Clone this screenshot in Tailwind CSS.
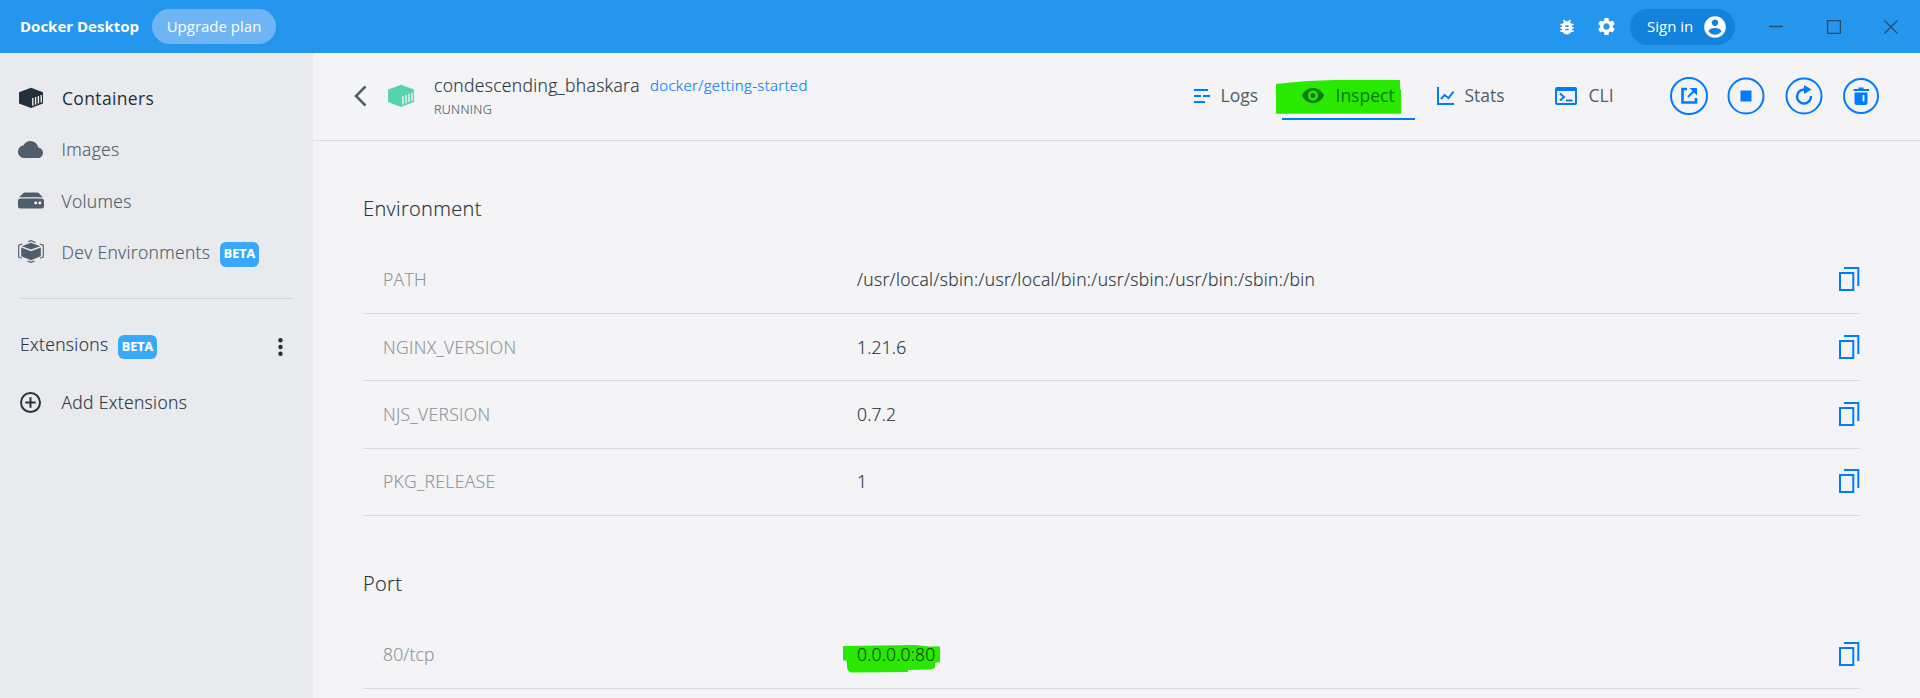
<!DOCTYPE html>
<html lang="en">
<head>
<meta charset="utf-8">
<title>Docker Desktop</title>
<script src="https://cdn.jsdelivr.net/npm/@tailwindcss/browser@4"></script>
</head>
<body class="h-[698px] w-[1920px] overflow-hidden bg-[#f4f4f6] font-['Open_Sans',sans-serif] text-[17.5px] leading-6 font-light tracking-[0.34px] text-[#27343f] [-webkit-text-stroke:0.2px]">
<svg class="hidden">
  <symbol id="container" viewBox="0 0 26 24" preserveAspectRatio="none">
    <path d="M13 .8 25 5.600v12.300L13 23 1 17.900V5.600z" fill="currentColor"/>
    <path d="M14.800 12v8.500M17.600 10.900v8.400M20.400 9.800v8.300M23.200 8.700v8.200" stroke="#ececef" stroke-width="1.4" fill="none"/>
  </symbol>
  <symbol id="copy" viewBox="0 0 21 24">
    <path d="M1 6h13.300v17H1zM5 1h14.300v18" fill="none" stroke="#007bff" stroke-width="2"/>
  </symbol>
</svg>

<header class="flex h-[53px] items-center bg-[#2496ed] pl-5 text-[15px] font-normal tracking-normal text-white [-webkit-text-stroke:0]">
  <div class="w-[132px] pb-px font-bold">Docker Desktop</div>
  <div class="flex h-[35px] w-[124px] items-center justify-center rounded-full bg-[#6fb5f6] pb-[2px]">Upgrade plan</div>
  <svg class="ml-auto size-[20px]" viewBox="0 0 24 24" fill="#fff"><path d="M20 8h-2.81a5.985 5.985 0 0 0-1.82-1.96L17 4.41 15.59 3l-2.17 2.17a6.002 6.002 0 0 0-2.83 0L8.41 3 7 4.41l1.62 1.63C7.88 6.55 7.26 7.22 6.81 8H4v2h2.09c-.05.33-.09.66-.09 1v1H4v2h2v1c0 .34.04.67.09 1H4v2h2.81c1.04 1.79 2.97 3 5.19 3s4.15-1.21 5.19-3H20v-2h-2.09c.05-.33.09-.66.09-1v-1h2v-2h-2v-1c0-.34-.04-.67-.09-1H20V8zm-6 8h-4v-2h4v2zm0-4h-4v-2h4v2z"/></svg>
  <svg class="ml-[19px] size-[21px]" viewBox="0 0 24 24" fill="#fff"><path d="M19.14 12.94c.04-.3.06-.61.06-.94 0-.32-.02-.64-.07-.94l2.03-1.58a.49.49 0 0 0 .12-.61l-1.92-3.32a.488.488 0 0 0-.59-.22l-2.39.96c-.5-.38-1.03-.7-1.62-.94l-.36-2.54a.484.484 0 0 0-.48-.41h-3.84c-.24 0-.43.17-.47.41l-.36 2.54c-.59.24-1.13.57-1.62.94l-2.39-.96c-.22-.08-.47 0-.59.22L2.74 8.87c-.12.21-.08.47.12.61l2.03 1.58c-.05.3-.09.63-.09.94s.02.64.07.94l-2.03 1.58a.49.49 0 0 0-.12.61l1.92 3.32c.12.22.37.29.59.22l2.39-.96c.5.38 1.03.7 1.62.94l.36 2.54c.05.24.24.41.48.41h3.84c.24 0 .44-.17.47-.41l.36-2.54c.59-.24 1.13-.56 1.62-.94l2.39.96c.22.08.47 0 .59-.22l1.92-3.32c.12-.22.07-.47-.12-.61l-2.01-1.58zM12 15.6A3.61 3.61 0 0 1 8.4 12c0-1.98 1.62-3.6 3.6-3.6s3.6 1.62 3.6 3.6-1.62 3.6-3.6 3.6z"/></svg>
  <div class="ml-[13px] flex h-9 w-[105px] items-center justify-between rounded-full bg-[#1282dc] pr-[7px] pl-[17px]">
    <span class="pb-[2px]">Sign in</span>
    <svg class="size-[26px]" viewBox="0 0 24 24" fill="#fff"><path d="M12 2C6.48 2 2 6.48 2 12s4.48 10 10 10 10-4.48 10-10S17.52 2 12 2zm0 3c1.66 0 3 1.34 3 3s-1.34 3-3 3-3-1.34-3-3 1.34-3 3-3zm0 14.2a7.2 7.2 0 0 1-6-3.22c.03-1.99 4-3.08 6-3.08 1.99 0 5.97 1.09 6 3.08a7.2 7.2 0 0 1-6 3.22z"/></svg>
  </div>
  <svg class="mr-[21px] ml-[34px] h-[14px] w-[130px]" viewBox="0 0 130 14" fill="none" stroke="#2d4a66" stroke-width="1.3"><path d="M0 6.5h14M58.6.6h12.8v12.8H58.6zM115.5.5l13 13M128.5.5l-13 13"/></svg>
</header>

<div class="flex h-[645px]">
  <aside class="w-[313px] shrink-0 bg-[#e9eaee] pt-[19px] text-[#505d6b]">
    <div class="flex h-[51.4px] items-center pl-[18px] font-normal text-[#22303a]">
      <svg class="h-[22px] w-[26px]"><use href="#container"/></svg>
      <span class="ml-[18px] font-medium tracking-[0.35px] [-webkit-text-stroke:0]">Containers</span>
    </div>
    <div class="flex h-[51.4px] items-center pl-[18px]">
      <svg class="h-[17px] w-[25px]" viewBox="0 4 24 16" preserveAspectRatio="none" fill="#505d6b"><path d="M19.35 10.04A7.49 7.49 0 0 0 12 4C9.11 4 6.6 5.64 5.35 8.04A5.994 5.994 0 0 0 0 14c0 3.31 2.69 6 6 6h13c2.76 0 5-2.24 5-5 0-2.64-2.05-4.78-4.65-4.96z"/></svg>
      <span class="ml-[18.5px]">Images</span>
    </div>
    <div class="flex h-[51.4px] items-center pl-[18px]">
      <svg class="h-[17px] w-[26px]" viewBox="0 0 26 17"><path d="M7 .5h12q1 0 1.6.6L25 5.3H1L5.4 1.1Q6 .5 7 .5zM2.500 6.500h21Q26 6.500 26 9v5q0 2.500-2.500 2.500h-21Q0 16.500 0 14V9q0-2.500 2.500-2.500z" fill="#505d6b"/><circle cx="17.7" cy="11" r="1.4" fill="#fff"/><circle cx="21.8" cy="11" r="1.4" fill="#fff"/></svg>
      <span class="mt-px ml-[17.5px]">Volumes</span>
    </div>
    <div class="flex h-[51.4px] items-center pl-[18px]">
      <svg class="h-[23px] w-[26px]" viewBox="0 0 26 23"><path d="M13 2.800 22.300 6.200 13 9.600 3.700 6.200zM3.200 7.600 13 11.300l9.800-3.700v8.600L13 20.300l-9.800-4.100z" fill="#505d6b"/><path d="M10 1.800 13 .7l4.500 1.700M4.200 3.900.7 5.200V17l3 1.300M21.800 3.900l3.500 1.300V17l-3 1.300M9.500 20.900l3.500 1.400 3.500-1.400" fill="none" stroke="#505d6b" stroke-width="1.1"/></svg>
      <span class="ml-[17.5px] w-[149px] whitespace-nowrap">Dev Environments</span>
      <span class="mt-[5px] ml-[9.5px] flex h-[25px] w-[39px] items-center justify-center rounded-md bg-[#39a8f8] text-[12.5px] font-bold tracking-normal text-white">BETA</span>
    </div>
    <div class="mx-5 mt-[20px] h-px bg-[#d0d3d8]"></div>
    <div class="mt-[20px] flex h-[51px] items-center pr-[30.5px] pl-5 text-[#27343f]">
      <span class="w-[88px] whitespace-nowrap">Extensions</span>
      <span class="mt-[6px] ml-[10px] flex h-6 w-[39px] items-center justify-center rounded-md bg-[#39a8f8] text-[12.5px] font-bold tracking-normal text-white">BETA</span>
      <svg class="mt-[5px] ml-auto h-[18px] w-[5px]" viewBox="0 0 5 18" fill="#22303a"><circle cx="2.5" cy="2.3" r="2.2"/><circle cx="2.5" cy="9" r="2.2"/><circle cx="2.5" cy="15.7" r="2.2"/></svg>
    </div>
    <div class="mt-[7px] flex h-[51px] items-center pl-[20px] text-[#27343f]">
      <svg class="size-[21px]" viewBox="0 0 21 21" fill="none" stroke="#27343f" stroke-width="2"><circle cx="10.5" cy="10.5" r="9.5"/><path d="M10.500 5.300v10.400M5.300 10.500h10.400"/></svg>
      <span class="ml-[20.5px]">Add Extensions</span>
    </div>
  </aside>

  <main class="flex-1">
    <div class="flex h-[88px] items-center border-b border-[#dadbde] pl-[41px]">
      <svg class="mb-[2px] h-[22px] w-[13px]" viewBox="0 0 13 22" fill="none" stroke="#505d6b" stroke-width="2.5"><path d="M11.500 1.500 2 11l9.500 9.500"/></svg>
      <svg class="mb-[2px] ml-[20px] h-[24px] w-[28px] text-[#56d2b1]"><use href="#container"/></svg>
      <div class="ml-[19px]">
        <div class="flex h-[24px] items-center"><span class="w-[206px]">condescending_bhaskara</span><span class="ml-[10px] pb-px text-[15px] text-[#007bff]">docker/getting-started</span></div>
        <div class="h-[23px] text-[12.5px] leading-[26px] text-[#505d6b]">RUNNING</div>
      </div>
      <nav class="ml-auto flex h-full items-center pr-[40px] pb-[2px] font-normal tracking-normal text-[#505d6b] [-webkit-text-stroke:0]">
        <div class="flex w-[88px] items-center">
          <svg class="h-[14px] w-[16px]" viewBox="0 0 16 14" fill="none" stroke="#007bff" stroke-width="2"><path d="M0 1h14M0 7h7M9 7h7M0 13h11"/></svg>
          <span class="ml-[11px] pb-[2px]">Logs</span>
        </div>
        <div class="relative flex h-full w-[133px] items-center pl-5 text-[#087b0c]">
          <svg class="absolute top-[27px] left-[-6px] h-[36px] w-[126px]" viewBox="0 0 126 36" fill="#29e900"><path d="M0 4Q28 .5 60 0h64v9l1 1v23.7H0z"/></svg>
          <svg class="relative h-[15px] w-[22px]" viewBox="1 4.500 22 15" fill="#087b0c"><path d="M12 4.500C7 4.500 2.730 7.610 1 12c1.730 4.390 6 7.500 11 7.500s9.270-3.110 11-7.500c-1.730-4.390-6-7.500-11-7.500zM12 17c-2.760 0-5-2.240-5-5s2.240-5 5-5 5 2.240 5 5-2.240 5-5 5zm0-7.500a2.500 2.500 0 1 0 0 5 2.500 2.500 0 0 0 0-5z"/></svg>
          <span class="relative ml-[12px] pb-[2px]">Inspect</span>
          <div class="absolute top-[65px] left-0 h-[2px] w-full bg-[#007bff]"></div>
        </div>
        <div class="flex w-[140px] items-center pl-[22px]">
          <svg class="h-[18px] w-[17px]" viewBox="0 0 17 18" fill="none" stroke="#007bff" stroke-width="2"><path d="M1 0v17h16M4 12l3.500-4 4 3 5-6.500"/></svg>
          <span class="ml-[11px] pb-[2px]">Stats</span>
        </div>
        <div class="flex w-[115px] items-center">
          <svg class="h-[18px] w-[22px]" viewBox="0 0 22 18" fill="none" stroke="#007bff" stroke-width="2"><rect x="1" y="1" width="20" height="16" rx="1"/><path d="M1 3h20"/><path d="m5 6.500 4 3.500-4 3.500M11 13.500h6.500"/></svg>
          <span class="ml-[12px] pb-[2px]">CLI</span>
        </div>
        <div class="flex items-center gap-[19.5px]">
          <svg class="size-[38px]" viewBox="0 0 38 38" fill="none" stroke="#007bff" stroke-width="2"><circle cx="19" cy="19" r="18"/><path d="M17 12h-4.500v13.500H26V21" stroke-width="2.6"/><path d="m18 20 7-7"/><path d="M19.500 11H27v7.500z" fill="#007bff" stroke="none"/></svg>
          <svg class="size-[38px]" viewBox="0 0 38 38" fill="none" stroke="#007bff" stroke-width="2"><circle cx="19" cy="19" r="17.5"/><path d="M13.500 13.500h11v11h-11z" fill="#007bff" stroke="none"/></svg>
          <svg class="size-[38px]" viewBox="0 0 38 38" fill="none" stroke="#007bff" stroke-width="2"><circle cx="19" cy="19" r="17.5"/><path d="M20 12.500h-1a7 7 0 1 0 7 6.500" stroke-width="2.5"/><path d="M19 8v9l7.500-4.500z" fill="#007bff" stroke="none"/></svg>
          <svg class="size-[38px]" viewBox="0 0 38 38" fill="none" stroke="#007bff" stroke-width="2"><circle cx="19" cy="19" r="17"/><path d="M16.500 10.500h5V12H27v2H11.500v-2h5zM12.500 15.500h13v10q0 2.500-2.500 2.500h-8q-2.500 0-2.500-2.500z" fill="#007bff" stroke="none"/><path d="M21.500 18v6.500" stroke="#f4f4f6" stroke-width="1.8"/></svg>
        </div>
      </nav>
    </div>

    <div class="w-[1547px] pt-[29.5px] pl-[50px]">
      <h2 class="flex h-[76px] items-center text-[20px]">Environment</h2>
      <div class="flex h-[67.4px] items-center border-b border-[#dadbde] pb-px pl-5">
        <span class="w-[474px] text-[#90959c]">PATH</span><span>/usr/local/sbin:/usr/local/bin:/usr/sbin:/usr/bin:/sbin:/bin</span>
        <svg class="ml-auto h-6 w-[21px]"><use href="#copy"/></svg>
      </div>
      <div class="flex h-[67.4px] items-center border-b border-[#dadbde] pb-px pl-5">
        <span class="w-[474px] text-[#90959c]">NGINX_VERSION</span><span class="tracking-[0.17px]">1.21.6</span>
        <svg class="ml-auto h-6 w-[21px]"><use href="#copy"/></svg>
      </div>
      <div class="flex h-[67.4px] items-center border-b border-[#dadbde] pb-px pl-5">
        <span class="w-[474px] text-[#90959c]">NJS_VERSION</span><span class="tracking-[0.17px]">0.7.2</span>
        <svg class="ml-auto h-6 w-[21px]"><use href="#copy"/></svg>
      </div>
      <div class="flex h-[67.4px] items-center border-b border-[#dadbde] pb-px pl-5">
        <span class="w-[474px] text-[#90959c]">PKG_RELEASE</span><span>1</span>
        <svg class="ml-auto h-6 w-[21px]"><use href="#copy"/></svg>
      </div>
      <h2 class="mt-[29.5px] flex h-[76px] items-center text-[20px]">Port</h2>
      <div class="flex h-[67.4px] items-center border-b border-[#dadbde] pb-[2px] pl-5">
        <span class="w-[474px] tracking-[0.17px] text-[#90959c]">80/tcp</span>
        <span class="relative text-[#17430c]">
          <svg class="absolute top-[3px] left-[-14px] h-[28px] w-[98px]" viewBox="0 0 98 28" fill="#29e900"><path d="M0 1 72 0l14 1.500h11V17l-5 1v3q0 3-4 3.500l-23 .5v2l-55 .5q-6 0-6-6v-4l-1-2H0z"/></svg>
          <span class="relative tracking-[0.17px]">0.0.0.0:80</span>
        </span>
        <svg class="ml-auto h-6 w-[21px]"><use href="#copy"/></svg>
      </div>
    </div>
  </main>
</div>
</body>
</html>
